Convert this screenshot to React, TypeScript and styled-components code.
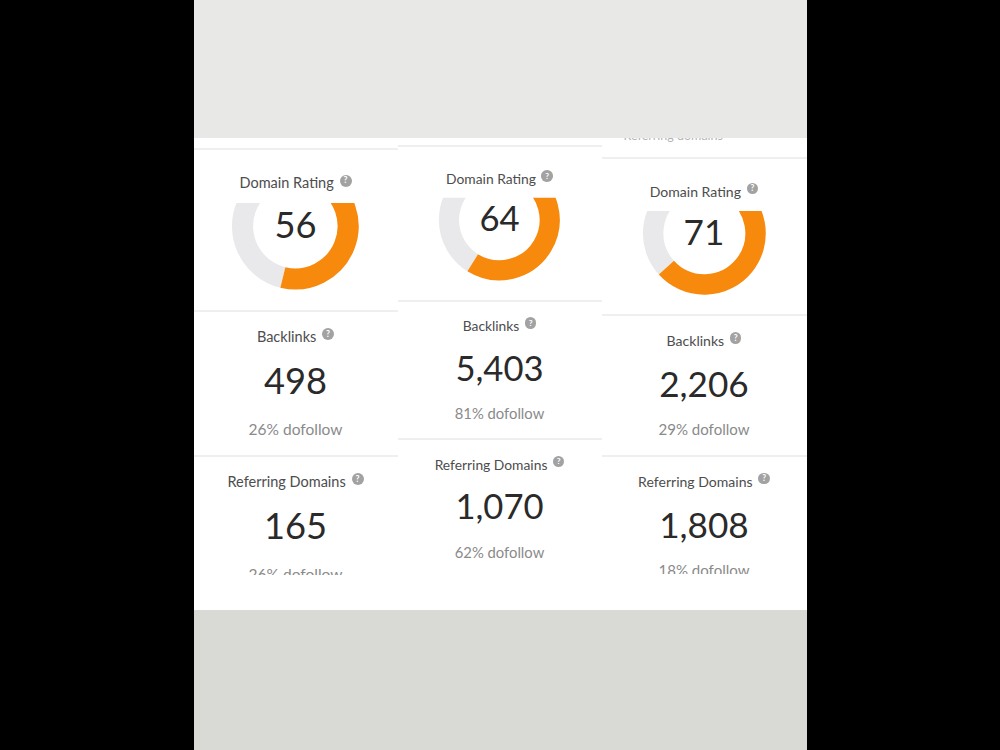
import styled, { createGlobalStyle } from "styled-components";
import { useId } from "react";

const GlobalStyle = createGlobalStyle`
  body {
    margin: 0;
    background: #000;
    font-family: Lato, "Liberation Sans", sans-serif;
  }
`;

const Frame = styled.div`
  width: 613px;
  height: 750px;
  margin: 0 auto;
  display: flex;
  flex-direction: column;
`;

const TopBand = styled.div`
  height: 138px;
  background: #e8e8e6;
`;

const BottomBand = styled.div`
  flex: 1;
  background: #d9d9d5;
`;

const Sheet = styled.div`
  height: 472px;
  background: #fff;
  display: grid;
  grid-template-columns: 204px 204px 205px;
  overflow: hidden;
`;

const Column = styled.div<{ $scale: number; $top: number }>`
  font-size: ${(p) => 14.5 * p.$scale}px;
  padding-top: ${(p) => p.$top}px;
  display: flex;
  flex-direction: column;
  position: relative;
`;

const CaptionStub = styled.div`
  position: absolute;
  top: 0;
  left: 22px;
  height: 7px;
  overflow: hidden;
  color: #b4b4b4;
  font-size: 12.5px;
  line-height: 16px;
  white-space: nowrap;
  span {
    display: block;
    margin-top: -10px;
  }
`;

const Section = styled.div<{ $h?: string; $clip?: number }>`
  box-sizing: border-box;
  border-top: 2px solid #efefef;
  display: flex;
  flex-direction: column;
  align-items: center;
  padding-top: 1.05em;
  flex-shrink: 0;
  ${(p) => (p.$h ? `height: ${p.$h};` : "")}
  ${(p) => (p.$clip ? `max-height: ${p.$clip}px; overflow: hidden;` : "")}
`;

const RatingSection = styled(Section)`
  padding-top: 1.62em;
  height: 11.17em;
`;

const LabelRow = styled.div`
  display: flex;
  align-items: center;
  justify-content: center;
  gap: 0.4em;
  line-height: 1.4em;
  color: #4d4d4d;
  white-space: nowrap;
`;

const Help = styled.span`
  font-size: 0.6em;
  width: 1.38em;
  height: 1.38em;
  border-radius: 50%;
  background: #a2a2a2;
  color: #fff;
  font-weight: 700;
  display: inline-flex;
  align-items: center;
  justify-content: center;
  line-height: 1;
  margin-bottom: 0.7em;
`;

const Figure = styled.div`
  font-size: 2.5em;
  line-height: 1.2;
  margin-top: 0.33em;
  color: #2a2a2a;
`;

const Dofollow = styled.div`
  font-size: 1.07em;
  line-height: 1.3;
  margin-top: 1.06em;
  color: #8a8a8a;
`;

const GaugeWrap = styled.div`
  position: relative;
  width: 9.15em;
  height: 6.38em;
  margin-top: 0.38em;
  svg {
    display: block;
    width: 100%;
    height: 100%;
  }
`;

const GaugeValue = styled.div<{ $cy: number }>`
  position: absolute;
  left: 0;
  right: 0;
  top: ${(p) => p.$cy}%;
  transform: translateY(-54%);
  text-align: center;
  font-size: 2.5em;
  line-height: 1;
  color: #2a2a2a;
`;

const W = 132;
const H = 92;
const CX = 66;
const CY = 27;
const R = 52.5;

// arc drawn with decreasing screen angle (left side, bottom, right side)
function arc(from: number, to: number) {
  const p = (a: number) => {
    const t = (a * Math.PI) / 180;
    return `${(CX + R * Math.cos(t)).toFixed(2)} ${(CY + R * Math.sin(t)).toFixed(2)}`;
  };
  const large = from - to > 180 ? 1 : 0;
  return `M ${p(from)} A ${R} ${R} 0 ${large} 0 ${p(to)}`;
}

function Gauge({ value }: { value: number }) {
  const id = useId().replace(/:/g, "");
  const split = -24 + (228 * value) / 100;
  return (
    <GaugeWrap>
      <svg viewBox={`0 0 ${W} ${H}`}>
        <defs>
          <clipPath id={`g${id}`}>
            <rect x="0" y={CY - 23} width={W} height={H} />
          </clipPath>
        </defs>
        <g clipPath={`url(#g${id})`} fill="none" strokeWidth="21">
          <path d={arc(240, split)} stroke="#e9e9ec" />
          <path d={arc(split, -60)} stroke="#f7890d" />
        </g>
      </svg>
      <GaugeValue $cy={(CY / H) * 100}>{value}</GaugeValue>
    </GaugeWrap>
  );
}

function Label({ children }: { children: string }) {
  return (
    <LabelRow>
      {children}
      <Help>?</Help>
    </LabelRow>
  );
}

type Snapshot = {
  scale: number;
  top: number;
  caption?: string;
  rating: number;
  backlinks: string;
  backlinksDo: string;
  domains: string;
  domainsDo: string;
  clip?: number;
};

const snapshots: Snapshot[] = [
  { scale: 1, top: 10, rating: 56, backlinks: "498", backlinksDo: "26%", domains: "165", domainsDo: "26%", clip: 120 },
  { scale: 0.955, top: 7, rating: 64, backlinks: "5,403", backlinksDo: "81%", domains: "1,070", domainsDo: "62%" },
  { scale: 0.97, top: 19, caption: "Referring domains", rating: 71, backlinks: "2,206", backlinksDo: "29%", domains: "1,808", domainsDo: "18%", clip: 119 },
];

function SnapshotColumn({ s }: { s: Snapshot }) {
  return (
    <Column $scale={s.scale} $top={s.top}>
      {s.caption && (
        <CaptionStub>
          <span>{s.caption}</span>
        </CaptionStub>
      )}
      <RatingSection>
        <Label>Domain Rating</Label>
        <Gauge value={s.rating} />
      </RatingSection>
      <Section $h="10em">
        <Label>Backlinks</Label>
        <Figure>{s.backlinks}</Figure>
        <Dofollow>{s.backlinksDo} dofollow</Dofollow>
      </Section>
      <Section $clip={s.clip}>
        <Label>Referring Domains</Label>
        <Figure>{s.domains}</Figure>
        <Dofollow>{s.domainsDo} dofollow</Dofollow>
      </Section>
    </Column>
  );
}

export default function App() {
  return (
    <>
      <GlobalStyle />
      <Frame>
        <TopBand />
        <Sheet>
          {snapshots.map((s, i) => (
            <SnapshotColumn key={i} s={s} />
          ))}
        </Sheet>
        <BottomBand />
      </Frame>
    </>
  );
}
